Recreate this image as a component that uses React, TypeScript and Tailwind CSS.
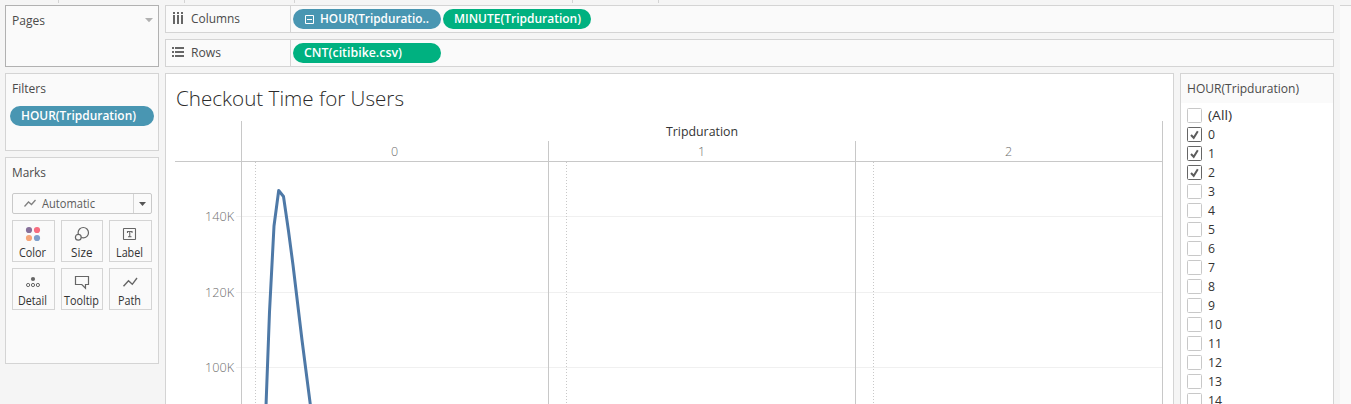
import React from "react";

const shelf = "flex h-7 shrink-0 border border-[#d4d4d4] bg-[#fafafa]";
const pill =
  "flex h-5 items-center overflow-hidden rounded-full pl-[10.5px] whitespace-nowrap";

function Fit({ w, children, className = "", size = 12.5, weight = 400, fill = "#4b4b4b" }: {
  w: number; children: string; className?: string; size?: number; weight?: number; fill?: string;
}) {
  return (
    <svg width={w} height="20" className={`block shrink-0 overflow-visible ${className}`}>
      <text x="0" y="14" fontSize={size} fontWeight={weight} fill={fill} textLength={w} lengthAdjust="spacingAndGlyphs">
        {children}
      </text>
    </svg>
  );
}

const gray = "#666666";

function MarkIcon({ kind }: { kind: string }) {
  return (
    <svg width="24" height="16" viewBox="0 0 24 16" fill="none" stroke={gray} className="ml-2 block shrink-0">
      {kind === "Color" && (
        <g stroke="none">
          <circle cx="8" cy="4" r="3.1" fill="#87709a" />
          <circle cx="16" cy="4" r="3.1" fill="#f76d80" />
          <circle cx="8" cy="12" r="3.1" fill="#f6a67a" />
          <circle cx="16" cy="12" r="3.1" fill="#7f9fcb" />
        </g>
      )}
      {kind === "Size" && (
        <g strokeWidth="1.2">
          <circle cx="13.3" cy="6.7" r="5.2" />
          <circle cx="8.3" cy="11.2" r="2.9" fill="#fafafa" />
        </g>
      )}
      {kind === "Label" && (
        <g>
          <rect x="5.5" y="2.5" width="12" height="11" rx="0.5" strokeWidth="1.1" />
          <path d="M9.5 7V5.5h4.5V7M11.75 5.5v5M10 10.7h3.5" strokeWidth="1.1" />
        </g>
      )}
      {kind === "Detail" && (
        <g>
          <circle cx="12" cy="5" r="2.1" fill={gray} stroke="none" />
          <circle cx="7.1" cy="11" r="1.6" />
          <circle cx="12" cy="11" r="1.6" />
          <circle cx="16.9" cy="11" r="1.6" />
        </g>
      )}
      {kind === "Tooltip" && <path d="M5.5 2.5h13v8h-3v3.7l-3.7-3.7h-6.3z" strokeWidth="1.2" />}
      {kind === "Path" && <path d="M5.5 12.3L10.5 6.7L14.3 10.3L19 4" strokeWidth="1.4" />}
    </svg>
  );
}

const marks: { name: string; w: number; indent: string }[] = [
  { name: "Color", w: 27, indent: "ml-[6px]" },
  { name: "Size", w: 21.5, indent: "ml-[9px]" },
  { name: "Label", w: 27, indent: "ml-[6px]" },
  { name: "Detail", w: 29, indent: "ml-[5px]" },
  { name: "Tooltip", w: 35, indent: "ml-[2px]" },
  { name: "Path", w: 23, indent: "ml-[8px]" },
];

const hours: { label: string; checked: boolean }[] = [
  { label: "(All)", checked: false },
  { label: "0", checked: true },
  { label: "1", checked: true },
  { label: "2", checked: true },
  ...Array.from({ length: 12 }, (_, i) => ({ label: String(i + 3), checked: false })),
];

function Sidebar() {
  return (
    <aside className="flex w-[154px] shrink-0 flex-col gap-1.5">
      <section className="flex h-[62px] items-start justify-between border border-[#b1b1b1] bg-[#fafafa] pl-1.5 pr-[5px] pt-[5px]">
        <Fit w={33}>Pages</Fit>
        <svg width="8" height="5" className="mt-[7px]"><path d="M0 0h8L4 4.2z" fill="#b1b1b1" /></svg>
      </section>
      <section className="h-[78px] border border-[#d4d4d4] bg-[#fafafa] pt-[5px]">
        <Fit w={34} className="ml-1.5">Filters</Fit>
        <div className={`${pill} ml-1 mt-[7px] w-36 bg-[#4996b2]`}>
          <Fit w={115} weight={550} fill="#fff">HOUR(Tripduration)</Fit>
        </div>
      </section>
      <section className="h-[207px] border border-[#d4d4d4] bg-[#fafafa] px-1.5 pt-[5px]">
        <Fit w={34}>Marks</Fit>
        <div className="mt-[10px] flex h-[21px] items-center rounded-[2px] border border-[#c9c9c9] bg-[#fafafa] pl-[11px]">
          <svg width="12" height="9" fill="none" stroke="#808080"><path d="M0.5 7.5L4.5 3L7.5 5.5L11.5 1" strokeWidth="1.3" /></svg>
          <Fit w={53} size={12} fill="#5c5c5c" className="ml-[6px]">Automatic</Fit>
          <div className="ml-auto flex h-full w-[18px] items-center justify-center border-l border-[#d4d4d4]">
            <svg width="7" height="4"><path d="M0 0h7L3.5 4z" fill="#555" /></svg>
          </div>
        </div>
        <div className="mt-1.5 grid grid-cols-[43px_42px_43px] gap-1.5">
          {marks.map((m) => (
            <div key={m.name} className="flex h-[42px] flex-col border border-[#d4d4d4] bg-[#fafafa] pt-[5px]">
              <MarkIcon kind={m.name} />
              <Fit w={m.w} size={12} fill="#333" className={`mt-px ${m.indent}`}>{m.name}</Fit>
            </div>
          ))}
        </div>
      </section>
    </aside>
  );
}

function Chart() {
  const v = "#c8c8c8";
  return (
    <svg width="1007" height="330" viewBox="166 74 1007 330" className="block" fontSize="12.5" fill="#6e6e6e">
      <text x="176" y="106" fontSize="20" fontWeight="300" fill="#2b2b2b" textLength="228" lengthAdjust="spacingAndGlyphs">Checkout Time for Users</text>
      <text x="666" y="136" fontSize="12" fontWeight="500" fill="#333" textLength="72" lengthAdjust="spacingAndGlyphs">Tripduration</text>
      {[394.5, 701.5, 1008.5].map((x, i) => (
        <text key={x} x={x} y="156" textAnchor="middle" fontWeight="350">{i}</text>
      ))}
      {["140K", "120K", "100K"].map((t, i) => (
        <text key={t} x="205" y={[221, 297, 372][i]} fontWeight="350" textLength="29" lengthAdjust="spacingAndGlyphs">{t}</text>
      ))}
      <g shapeRendering="crispEdges">
        {[216, 292, 367].map((y) => <rect key={y} x="236" y={y} width="926" height="1" fill="#f0f0f0" />)}
        {[255.5, 566.5, 873.5].map((x) => (
          <line key={x} x1={x} x2={x} y1="162" y2="404" stroke="#c8c8c8" strokeDasharray="1 2" />
        ))}
        <rect x="175" y="161" width="988" height="1" fill={v} />
        <rect x="241" y="121" width="1" height="283" fill={v} />
        <rect x="548" y="141" width="1" height="263" fill={v} />
        <rect x="855" y="141" width="1" height="263" fill={v} />
        <rect x="1162" y="121" width="1" height="283" fill={v} />
      </g>
      <polyline points="266,406 269.5,312 274,226 278.7,190.5 283.5,196.5 288.5,231 293,265 302,340 310.5,406" fill="none" stroke="#4e79a7" strokeWidth="3" strokeLinejoin="round" />
    </svg>
  );
}

function FilterCard() {
  return (
    <section className="h-[340px] w-[154px] border border-[#d4d4d4] bg-white">
      <header className="h-[29px] bg-[#fafafa] pl-1.5 pt-[5px]">
        <Fit w={112}>HOUR(Tripduration)</Fit>
      </header>
      <ul className="pt-[3px]">
        {hours.map((h) => (
          <li key={h.label} className="flex h-[19px] items-center pl-1.5">
            <svg width="15" height="15" fill="none">
              <rect x="0.5" y="0.5" width="14" height="14" rx="1" fill="#fff" stroke={h.checked ? "#666" : "#c8c8c8"} />
              {h.checked && <path d="M4 8L6.7 10.8L10.8 4.3" stroke="#5c5c5c" strokeWidth="2" />}
            </svg>
            <Fit w={h.label === "(All)" ? 24 : h.label.length * 7} size={12.5} fill="#333" className="ml-[6px]">{h.label}</Fit>
          </li>
        ))}
      </ul>
    </section>
  );
}

export default function App() {
  return (
    <div className="flex h-[404px] w-[1351px] flex-col overflow-hidden bg-[#f5f5f5] font-['Open_Sans','Noto_Sans',sans-serif]">
      <div className="h-[5px] shrink-0">
        <svg width="1351" height="3" className="block" fill="#d4d4d4">
          {[58, 184, 294, 572, 658].map((x) => <rect key={x} x={x} y="0" width="1" height="3" />)}
        </svg>
      </div>
      <div className="flex min-h-0 flex-1 gap-1.5 pl-[5px]">
        <Sidebar />
        <main className="flex w-[1169px] shrink-0 flex-col gap-1.5">
          <div className={shelf}>
            <div className="flex w-[125px] items-center border-r border-[#d4d4d4] pl-[7px]">
              <svg width="12" height="12" fill={gray} className="-mt-0.5">
                {[0, 4, 8].map((x) => <g key={x}><rect x={x} y="0" width="2" height="2" /><rect x={x} y="3" width="2" height="9" /></g>)}
              </svg>
              <Fit w={49} className="ml-[6px]">Columns</Fit>
            </div>
            <div className="flex items-start gap-0.5 pl-0.5 pt-[3px]">
              <div className={`${pill} w-[148px] bg-[#4996b2]`}>
                <svg width="9" height="9" fill="none" stroke="#fff" className="ml-[1.5px] mr-[6px]"><path d="M0.5 0.5h8v8h-8zM2 4.5h5" /></svg>
                <Fit w={109} weight={550} fill="#fff">HOUR(Tripduratio..</Fit>
              </div>
              <div className={`${pill} w-[148px] bg-[#00b180]`}>
                <Fit w={127} weight={550} fill="#fff">MINUTE(Tripduration)</Fit>
              </div>
            </div>
          </div>
          <div className={shelf}>
            <div className="flex w-[125px] items-center border-r border-[#d4d4d4] pl-[6px]">
              <svg width="12" height="10" fill={gray} className="-mt-0.5">
                {[0, 4, 8].map((y) => <g key={y}><rect x="0" y={y} width="2" height="2" /><rect x="3" y={y} width="9" height="2" /></g>)}
              </svg>
              <Fit w={30} className="ml-[7px]">Rows</Fit>
            </div>
            <div className="flex items-start pl-0.5 pt-[3px]">
              <div className={`${pill} w-[148px] bg-[#00b180]`}>
                <Fit w={98} weight={550} fill="#fff">CNT(citibike.csv)</Fit>
              </div>
            </div>
          </div>
          <div className="flex gap-1.5">
            <section className="h-[340px] w-[1009px] border border-[#d4d4d4] bg-white"><Chart /></section>
            <FilterCard />
          </div>
        </main>
        <aside className="flex-1 border-t border-[#d4d4d4] bg-[#fafafa]" />
      </div>
    </div>
  );
}
